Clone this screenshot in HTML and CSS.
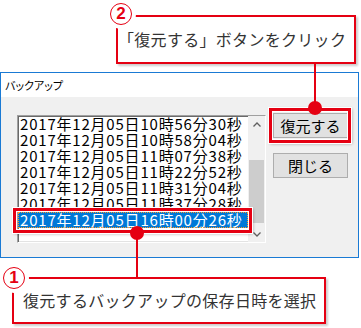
FILE: index.html
```html
<!DOCTYPE html>
<html lang="ja">
    <head>
        <meta charset="UTF-8" />
        <title>バックアップ</title>
        <link rel="stylesheet" href="styles.css">
    </head>
    <body>
        <div class="page">
            <div class="note noteTop">
                <span class="noteText">「復元する」ボタンをクリック</span>
            </div>

            <div class="window">
                <div class="titleBar">バックアップ</div>
                <div class="windowBody">
                    <div class="listBox">
                        <div class="items">
                            <div class="item">2017年12月05日10時56分30秒</div>
                            <div class="item">2017年12月05日10時58分04秒</div>
                            <div class="item">2017年12月05日11時07分38秒</div>
                            <div class="item">2017年12月05日11時22分52秒</div>
                            <div class="item">2017年12月05日11時31分04秒</div>
                            <div class="item">2017年12月05日11時37分28秒</div>
                            <div class="item selected">2017年12月05日16時00分26秒</div>
                        </div>
                        <div class="scrollBar">
                            <div class="arrow">
                                <svg width="8" height="5" viewBox="0 0 8 5"><path d="M0.5 4.5 L4 1 L7.5 4.5" fill="none" stroke="#606060" stroke-width="1.3"/></svg>
                            </div>
                            <div class="track"><div class="thumb"></div></div>
                            <div class="arrow">
                                <svg width="8" height="5" viewBox="0 0 8 5"><path d="M0.5 0.5 L4 4 L7.5 0.5" fill="none" stroke="#606060" stroke-width="1.3"/></svg>
                            </div>
                        </div>
                    </div>
                    <div class="buttons">
                        <div class="button">復元する</div>
                        <div class="button">閉じる</div>
                    </div>
                </div>
            </div>

            <div class="note noteBottom">
                <span class="noteText">復元するバックアップの保存日時を選択</span>
            </div>

            <!-- annotation overlays -->
            <div class="num num2">2</div>
            <div class="num num1">1</div>
            <div class="highlight hl1"></div>
            <div class="highlight hl2"></div>
            <div class="vline vline1"></div>
            <div class="vline vline2"></div>
            <div class="dot dot1"></div>
            <div class="dot dot2"></div>
        </div>
    </body>
</html>
```

FILE: styles.css
```css
body {
    margin: 0;
    background-color: #fff;
    font-family: "Noto Sans CJK JP", sans-serif;
}
.page {
    position: relative;
    width: 361px;
    height: 328px;
    overflow: hidden;
}

/* callout boxes */
.note {
    box-sizing: border-box;
    border: 2px solid #e50012;
    background-color: #fff;
    box-shadow: 2px 2px 2px rgba(0, 0, 0, 0.2);
    display: flex;
    align-items: center;
    color: #333;
    font-size: 16px;
    letter-spacing: 0.3px;
}
.noteTop {
    margin: 15px 0 0 116px;
    width: 240px;
    height: 49px;
    padding: 0 0 2px 0;
}
.noteBottom {
    margin: 19px 0 0 12px;
    width: 314px;
    height: 47px;
    padding: 0 0 2px 9px;
}

/* window */
.window {
    box-sizing: border-box;
    margin-top: 8px;
    width: 359px;
    height: 186px;
    border: 1px solid #1a7ad4;
    background-color: #f0f0f0;
}
.titleBar {
    height: 24px;
    line-height: 24px;
    background-color: #fff;
    padding-left: 4px;
    font-size: 11px;
    font-feature-settings: "palt";
    color: #000;
}
.windowBody {
    display: flex;
    align-items: flex-start;
    gap: 7px;
    padding: 16px 9px 0 16px;
}
.listBox {
    box-sizing: border-box;
    margin-top: 2px;
    width: 249px;
    height: 128px;
    border: 1px solid;
    border-color: #a0a0a0 #fff #fff #a0a0a0;
    box-shadow: inset 1px 1px 0 #696969, inset -1px -1px 0 #e3e3e3;
    background-color: #fff;
    display: flex;
}
.items {
    width: 230px;
    overflow: hidden;
}
.item {
    height: 16px;
    line-height: 16px;
    padding-left: 2px;
    font-size: 15px;
    letter-spacing: 0.8px;
    white-space: nowrap;
    color: #000;
}
.item.selected {
    background-color: #0078d7;
    color: #fff;
    outline: 1px dotted #ff9a28;
    outline-offset: -1px;
}
.scrollBar {
    width: 17px;
    background-color: #f0f0f0;
    display: flex;
    flex-direction: column;
}
.arrow {
    height: 16px;
    display: flex;
    align-items: center;
    justify-content: center;
}
.track {
    flex: 1;
    padding: 28px 1px 1px 1px;
}
.thumb {
    height: 63px;
    background-color: #cdcdcd;
}
.buttons {
    display: flex;
    flex-direction: column;
    gap: 15px;
}
.button {
    box-sizing: border-box;
    width: 75px;
    height: 25px;
    border: 1px solid #adadad;
    background-color: #e1e1e1;
    display: flex;
    align-items: center;
    justify-content: center;
    font-size: 15px;
    color: #000;
}

/* annotation marks */
.num {
    position: absolute;
    box-sizing: border-box;
    width: 22px;
    height: 22px;
    border: 1.5px solid #e50012;
    border-radius: 50%;
    background-color: #fff;
    box-shadow: 0 0 0 4px #fff;
    color: #e50012;
    font-family: "Liberation Sans", sans-serif;
    font-weight: bold;
    font-size: 17px;
    line-height: 19px;
    text-align: center;
}
.num2 {
    left: 110px;
    top: 3px;
}
.num1 {
    left: 3px;
    top: 267px;
}
.highlight {
    position: absolute;
    box-sizing: border-box;
    border: 3px solid #e50012;
    box-shadow: inset 0 0 0 1px #fff, 0 0 0 1px #fff, 1px 1px 3px rgba(0, 0, 0, 0.3);
}
.hl1 {
    left: 13px;
    top: 208px;
    width: 239px;
    height: 25px;
}
.hl2 {
    left: 269px;
    top: 108px;
    width: 82px;
    height: 35px;
}
.vline {
    position: absolute;
    width: 2px;
    background-color: #e50012;
}
.vline1 {
    left: 136px;
    top: 233px;
    height: 45px;
}
.vline2 {
    left: 314px;
    top: 63px;
    height: 45px;
}
.dot {
    position: absolute;
    width: 14px;
    height: 14px;
    border-radius: 50%;
    background-color: #e50012;
}
.dot1 {
    left: 130px;
    top: 226px;
}
.dot2 {
    left: 308px;
    top: 101px;
}
```
